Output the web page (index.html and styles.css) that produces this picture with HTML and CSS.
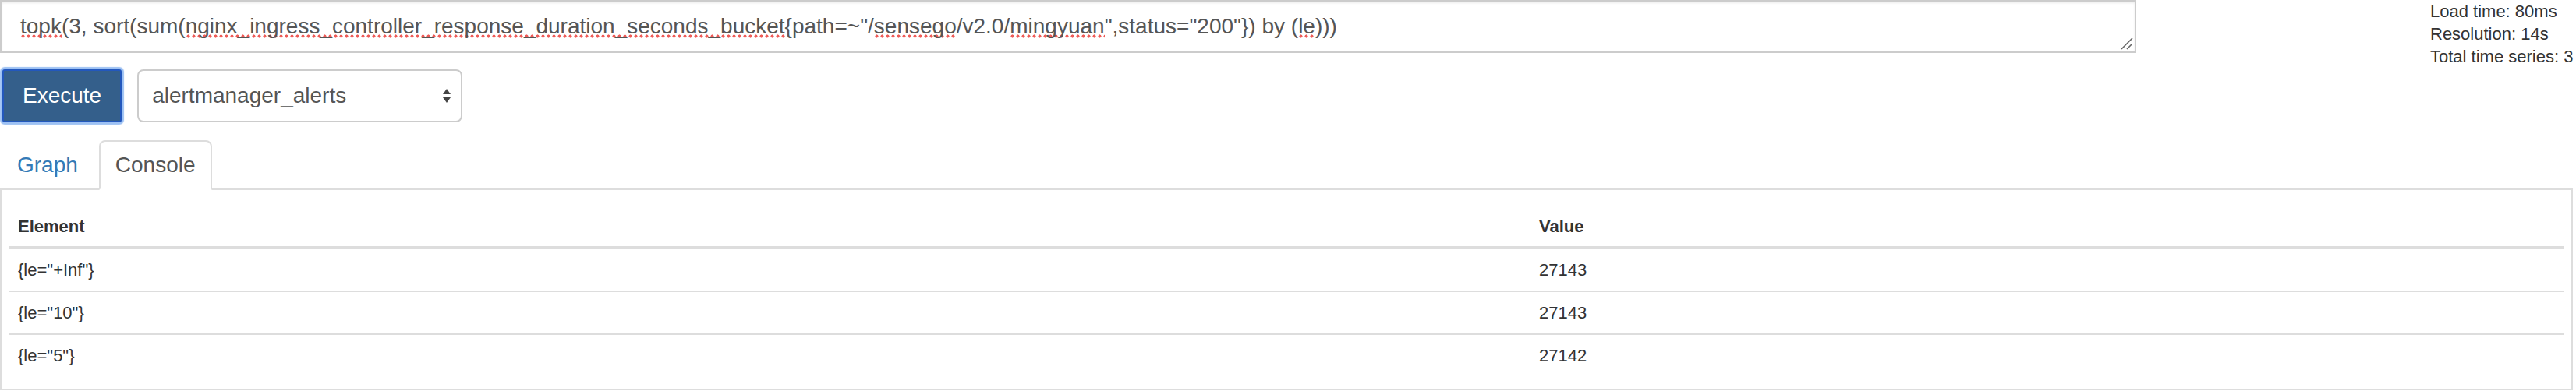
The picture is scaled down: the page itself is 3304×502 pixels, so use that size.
FILE: index.html
```html
<!DOCTYPE html>
<html lang="en">
<head>
    <meta charset="UTF-8">
    <title>Prometheus Time Series Collection and Processing Server</title>
    <link rel="stylesheet" href="styles.css">
</head>
<body>
    <div class="query-row">
        <div class="expr-input">
            <span class="typo">topk</span>(3, sort(sum(<span class="typo">nginx_ingress_controller_response_duration_seconds_bucket</span>{path=~"/<span class="typo">sensego</span>/v2.0/<span class="typo">mingyuan</span>",status="200"}) by (<span class="typo">le</span>)))
            <svg class="grip" width="16" height="16" viewBox="0 0 16 16">
                <line x1="1" y1="15" x2="15" y2="1" />
                <line x1="8" y1="15" x2="15" y2="8" />
            </svg>
        </div>
        <div class="eval-stats">
            <div>Load time: 80ms</div>
            <div>Resolution: 14s</div>
            <div>Total time series: 3</div>
        </div>
    </div>

    <div class="action-row">
        <button class="btn-execute">Execute</button>
        <div class="metric-select">
            <span>alertmanager_alerts</span>
            <svg class="select-arrows" width="10" height="20" viewBox="0 0 10 20">
                <polygon points="0,8 5,1 10,8" />
                <polygon points="0,12 5,19 10,12" />
            </svg>
        </div>
    </div>

    <div class="tab-area">
        <ul class="nav-tabs">
            <li class="tab"><a href="#">Graph</a></li>
            <li class="tab active"><a href="#">Console</a></li>
        </ul>
        <div class="tab-panel">
            <table class="data-table">
                <thead>
                    <tr>
                        <th class="col-element">Element</th>
                        <th>Value</th>
                    </tr>
                </thead>
                <tbody>
                    <tr>
                        <td>{le="+Inf"}</td>
                        <td>27143</td>
                    </tr>
                    <tr>
                        <td>{le="10"}</td>
                        <td>27143</td>
                    </tr>
                    <tr>
                        <td>{le="5"}</td>
                        <td>27142</td>
                    </tr>
                </tbody>
            </table>
        </div>
    </div>
</body>
</html>
```

FILE: styles.css
```css
body {
    margin: 0;
    background-color: #FFFFFF;
    font-family: 'Liberation Sans', Arial, Helvetica, sans-serif;
    color: #333333;
}

/* Query row - stats may hang below the input */
.query-row {
    display: flex;
    align-items: flex-start;
    height: 68px;
}

.expr-input {
    position: relative;
    box-sizing: border-box;
    width: 2740px;
    height: 68px;
    padding: 12px 24px;
    border: 2px solid #cccccc;
    box-shadow: inset 0 2px 3px rgba(0, 0, 0, 0.08);
    font-size: 28px;
    line-height: 40px;
    color: #555555;
    white-space: nowrap;
    overflow: hidden;
}

/* spell check dots */
.typo {
    background-image: radial-gradient(circle, #ee5b57 1.8px, transparent 2.3px);
    background-size: 7px 5px;
    background-repeat: repeat-x;
    background-position: 0 26px;
}

.grip {
    position: absolute;
    right: 2px;
    bottom: 2px;
}

.grip line {
    stroke: #666666;
    stroke-width: 1.6;
}

.eval-stats {
    margin-left: 377px;
    font-size: 22px;
    line-height: 29px;
    white-space: nowrap;
}

/* Execute + metric select */
.action-row {
    display: flex;
    align-items: center;
    gap: 20px;
    margin-top: 21px;
    padding-left: 3px;
}

.btn-execute {
    box-sizing: border-box;
    height: 68px;
    padding: 12px 24px;
    border: 2px solid #2358bd;
    border-radius: 3px;
    background-color: #345f8b;
    box-shadow: 0 0 1px 3px #9dc1f3;
    font-family: inherit;
    font-size: 28px;
    line-height: 40px;
    color: #FFFFFF;
}

.metric-select {
    box-sizing: border-box;
    display: flex;
    align-items: center;
    justify-content: space-between;
    width: 417px;
    height: 68px;
    padding: 0 13px 0 17px;
    border: 2px solid #cccccc;
    border-radius: 8px;
    font-size: 28px;
    color: #555555;
}

.select-arrows polygon {
    fill: #444444;
}

/* Tabs */
.tab-area {
    width: 3300px;
    margin-top: 23px;
}

.nav-tabs {
    list-style: none;
    display: flex;
    gap: 6px;
    margin: 0;
    padding: 0 0 0 1px;
    border-bottom: 2px solid #dddddd;
}

.tab {
    margin-bottom: -2px;
}

.tab a {
    display: block;
    padding: 10px 19px;
    border: 2px solid transparent;
    border-radius: 8px 8px 0 0;
    font-size: 28px;
    line-height: 40px;
    color: #337ab7;
    text-decoration: none;
}

.tab.active a {
    border-color: #dddddd;
    border-bottom-color: #FFFFFF;
    background-color: #FFFFFF;
    color: #555555;
}

.tab-panel {
    padding: 21px 10px 16px;
    border: 2px solid #dddddd;
    border-top: 0;
}

/* Console table */
.data-table {
    width: 100%;
    border-collapse: collapse;
    table-layout: fixed;
    font-size: 22px;
    line-height: 29px;
}

.data-table th {
    padding: 11px;
    border-bottom: 4px solid #dddddd;
    text-align: left;
    font-weight: bold;
}

.data-table .col-element {
    width: 1929px;
}

.data-table td {
    padding: 12px 11px;
    border-top: 2px solid #dddddd;
}

.data-table tbody tr:first-child td {
    border-top: 0;
}
```
